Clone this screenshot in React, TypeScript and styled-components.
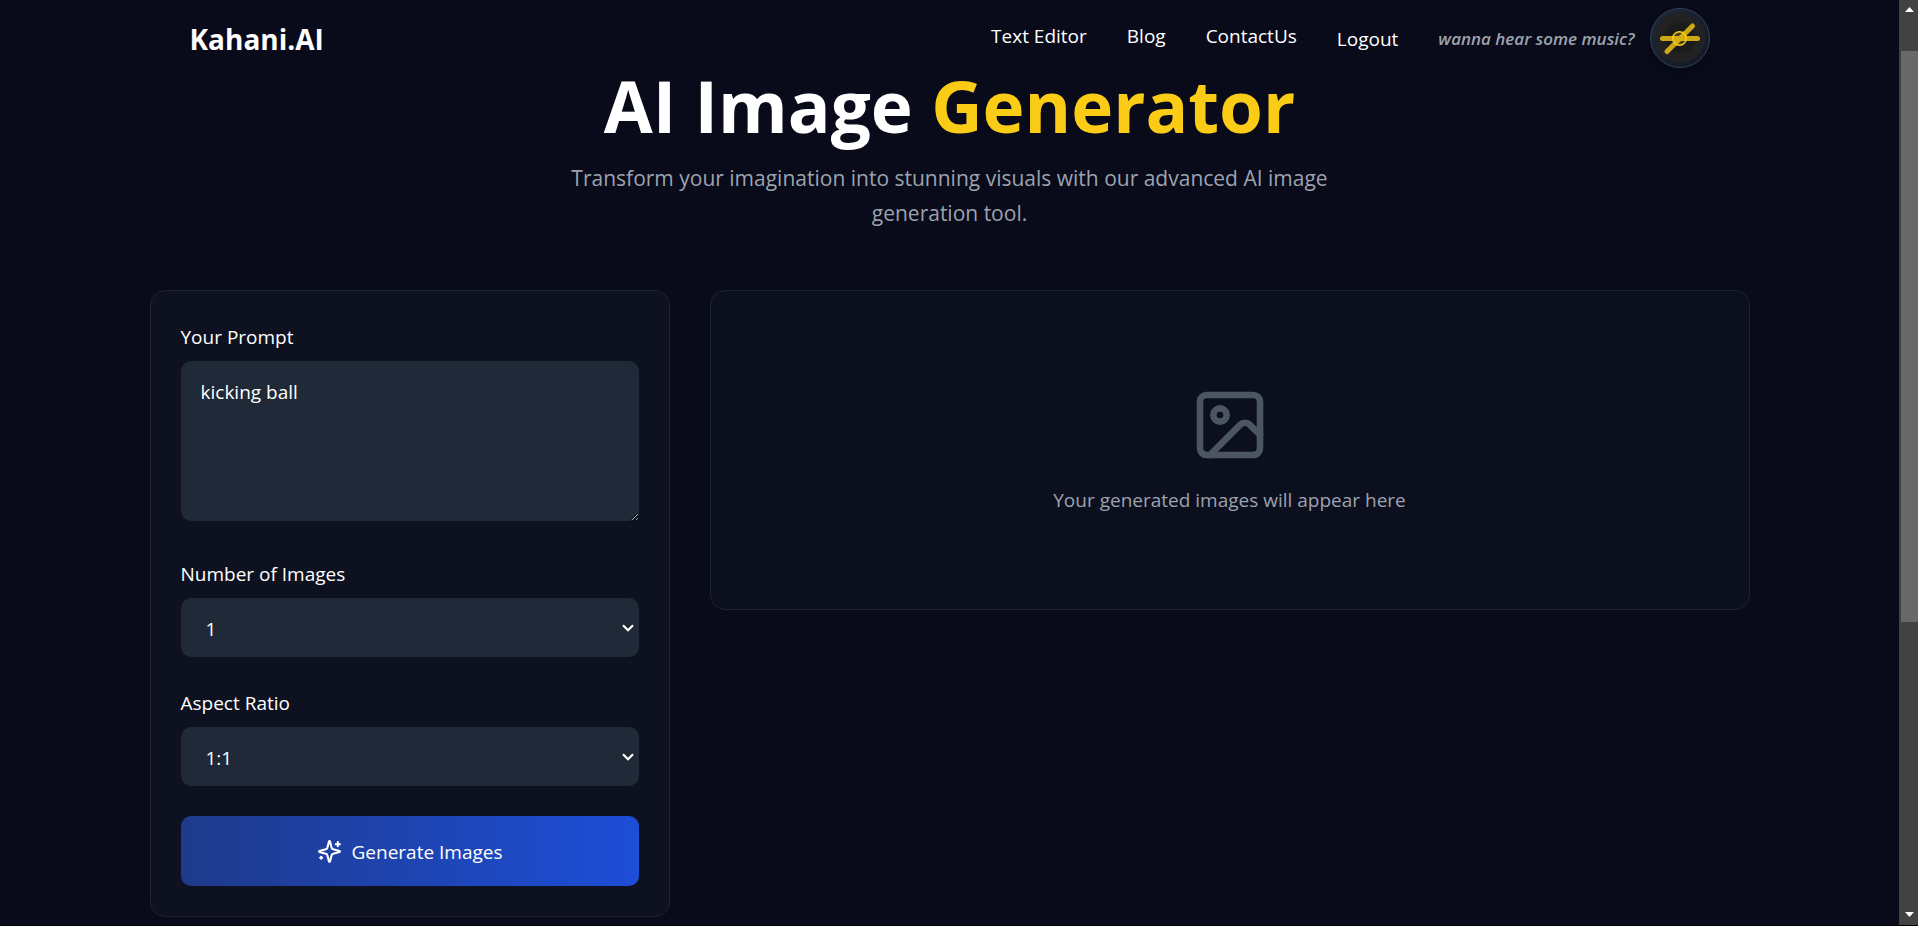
import React, { useState } from "react";
import styled, { createGlobalStyle } from "styled-components";
import { Image as ImageIcon } from "lucide-react";

const GlobalStyle = createGlobalStyle`
  *, *::before, *::after { box-sizing: border-box; }
  body {
    margin: 0;
    background: #090a1a;
    color: #ffffff;
    font: 400 19px/30px "Open Sans", "Noto Sans", sans-serif;
  }
  button, select, textarea { font: inherit; color: inherit; }
`;

const Page = styled.div`
  display: flex;
  min-height: 100vh;
  border-bottom: 1px solid #000000;
`;

const Content = styled.div`
  flex: 1;
  min-width: 0;
`;

const Container = styled.div`
  width: 100%;
  max-width: 1600px;
  margin: 0 auto;
`;

const Header = styled.header`
  padding-top: 8px;
`;

const HeaderRow = styled(Container)`
  display: flex;
  align-items: center;
  justify-content: space-between;
  height: 60px;
  padding: 0 40px;
`;

const Logo = styled.a`
  padding-top: 2px;
  font-size: 28px;
  line-height: 40px;
  font-weight: 700;
  color: #ffffff;
  text-decoration: none;
`;

const Nav = styled.nav`
  display: flex;
  align-items: center;
  gap: 40px;
`;

const NavLink = styled.a`
  padding-bottom: 4px;
  font-weight: 500;
  color: #ffffff;
  text-decoration: none;
`;

const LogoutButton = styled.button`
  padding: 2px 0 0;
  border: 0;
  background: none;
  font-weight: 500;
  cursor: pointer;
`;

const Music = styled.div`
  display: flex;
  align-items: center;
  gap: 15px;
`;

const MusicHint = styled.span`
  padding-top: 2px;
  font-size: 17px;
  font-style: italic;
  font-weight: 600;
  color: #9ca3af;
`;

const DiscButton = styled.button`
  display: block;
  width: 60px;
  height: 60px;
  padding: 0;
  border: 0;
  border-radius: 50%;
  background: none;
  box-shadow: 0 5px 8px rgba(0, 0, 0, 0.1);
  cursor: pointer;

  svg { display: block; }
`;

const Hero = styled.section`
  display: flex;
  flex-direction: column;
  align-items: center;
  gap: 18px;
  margin-bottom: 59px;
  text-align: center;
`;

const Title = styled.h1`
  margin: 0;
  font-size: 71px;
  line-height: 75px;
  font-weight: 700;

  span { color: #facc15; }
`;

const Subtitle = styled.p`
  max-width: 840px;
  margin: 0;
  font-size: 21px;
  line-height: 35px;
  color: #9ca3af;
`;

const Workspace = styled(Container)`
  display: grid;
  grid-template-columns: 1fr 2fr;
  align-items: start;
  gap: 40px;
`;

const FormCard = styled.form`
  display: flex;
  flex-direction: column;
  gap: 30px;
  padding: 30px;
  border: 1px solid #1c2332;
  border-radius: 15px;
  background: #0e1120;
`;

const Field = styled.div<{ $tall?: boolean }>`
  display: flex;
  flex-direction: column;
  gap: 8px;
  padding-bottom: ${(p) => (p.$tall ? 7 : 0)}px;
`;

const Label = styled.label`
  line-height: 32px;
`;

const PromptBox = styled.textarea`
  display: block;
  width: 100%;
  height: 160px;
  padding: 16px 20px;
  border: 0;
  border-radius: 10px;
  outline: none;
  background: #1f2937;
  resize: vertical;
`;

const SelectWrap = styled.div`
  position: relative;

  svg {
    position: absolute;
    top: 26px;
    right: 5px;
    pointer-events: none;
  }
`;

const Select = styled.select`
  display: block;
  width: 100%;
  height: 59px;
  padding: 2px 25px 0;
  border: 0;
  border-radius: 10px;
  outline: none;
  appearance: none;
  background: #1f2937;
`;

const GenerateButton = styled.button`
  display: flex;
  align-items: center;
  justify-content: center;
  gap: 10px;
  height: 70px;
  border: 0;
  border-radius: 10px;
  background: linear-gradient(to right, #1e3a8a, #1d4ed8);
  cursor: pointer;
`;

const ButtonText = styled.span`
  line-height: 28px;
  padding-top: 2px;
`;

const Gallery = styled.section`
  display: flex;
  flex-direction: column;
  align-items: center;
  justify-content: center;
  gap: 20px;
  min-height: 320px;
  border: 1px solid #1a2433;
  border-radius: 15px;
  background: #0c0f1e;
  color: #9ca3af;

  p { margin: 0; }
`;

const ScrollTrack = styled.aside`
  display: flex;
  flex-direction: column;
  position: sticky;
  top: 0;
  width: 19px;
  height: calc(100vh - 1px);
  padding-left: 2px;
  background: #424242;

  svg { display: block; flex: none; }
`;

const ScrollPart = styled.div<{ $grow: number; $thumb?: boolean }>`
  flex: ${(p) => p.$grow} 0 0;
  background: ${(p) => (p.$thumb ? "#686868" : "transparent")};
`;

const Disc = () => (
  <svg width="60" height="60" viewBox="0 0 60 60" fill="none" aria-hidden="true">
    <defs>
      <linearGradient id="rim" x1="0" y1="0" x2="1" y2="1">
        <stop offset="0" stopColor="#1f2937" />
        <stop offset="1" stopColor="#111827" />
      </linearGradient>
      <radialGradient id="vinyl">
        <stop offset="0.2" stopColor="#1a1a1a" />
        <stop offset="0.55" stopColor="#1b1b1b" />
        <stop offset="0.7" stopColor="#222222" />
        <stop offset="1" stopColor="#222222" />
      </radialGradient>
    </defs>
    <circle cx="30" cy="30" r="29.5" fill="url(#rim)" stroke="#374151" />
    <circle cx="30" cy="30" r="25" fill="url(#vinyl)" />
    <path
      d="M12.5 30.5h35M17 43.5l25.5-25.5"
      stroke="#facc15"
      strokeOpacity="0.8"
      strokeWidth="5"
      strokeLinecap="round"
    />
    <circle cx="29.5" cy="30.5" r="6.8" fill="#facc15" fillOpacity="0.2" stroke="#facc15" strokeWidth="1.5" />
  </svg>
);

const Sparkles = () => (
  <svg
    width="25"
    height="25"
    viewBox="0 0 24 24"
    fill="none"
    stroke="currentColor"
    strokeWidth="2"
    strokeLinecap="round"
    strokeLinejoin="round"
    aria-hidden="true"
  >
    <path d="M9.937 15.5A2 2 0 0 0 8.5 14.063l-6.135-1.582a.5.5 0 0 1 0-.962L8.5 9.936A2 2 0 0 0 9.937 8.5l1.582-6.135a.5.5 0 0 1 .963 0L14.063 8.5A2 2 0 0 0 15.5 9.937l6.135 1.581a.5.5 0 0 1 0 .964L15.5 14.063a2 2 0 0 0-1.437 1.437l-1.582 6.135a.5.5 0 0 1-.963 0z" />
    <path d="M20 3v4M22 5h-4M4 17v2M5 18H3" />
  </svg>
);

const SelectArrow = () => (
  <svg width="12" height="8" viewBox="0 0 12 8" fill="none" aria-hidden="true">
    <path d="M1 1.2l5 5 5-5" stroke="#ffffff" strokeWidth="2.2" />
  </svg>
);

const ScrollArrow = ({ down }: { down?: boolean }) => (
  <svg width="17" height="17" viewBox="0 0 17 17" aria-hidden="true">
    <path d={down ? "M4 4h9l-4.5 5z" : "M4 12h9l-4.5-5z"} fill="#ffffff" />
  </svg>
);

interface SelectFieldProps {
  id: string;
  label: string;
  options: string[];
}

const SelectField = ({ id, label, options }: SelectFieldProps) => (
  <Field>
    <Label htmlFor={id}>{label}</Label>
    <SelectWrap>
      <Select id={id} defaultValue={options[0]}>
        {options.map((option) => (
          <option key={option}>{option}</option>
        ))}
      </Select>
      <SelectArrow />
    </SelectWrap>
  </Field>
);

export default function App() {
  const [prompt, setPrompt] = useState("kicking ball");

  return (
    <>
      <GlobalStyle />
      <Page>
        <Content>
          <Header>
            <HeaderRow>
              <Logo href="#">Kahani.AI</Logo>
              <Nav>
                <NavLink href="#editor">Text Editor</NavLink>
                <NavLink href="#blog">Blog</NavLink>
                <NavLink href="#contact">ContactUs</NavLink>
                <LogoutButton type="button">Logout</LogoutButton>
                <Music>
                  <MusicHint>wanna hear some music?</MusicHint>
                  <DiscButton type="button" aria-label="Play music">
                    <Disc />
                  </DiscButton>
                </Music>
              </Nav>
            </HeaderRow>
          </Header>
          <main>
            <Hero>
              <Title>
                AI Image <span>Generator</span>
              </Title>
              <Subtitle>
                Transform your imagination into stunning visuals with our advanced AI image generation tool.
              </Subtitle>
            </Hero>
            <Workspace>
              <FormCard onSubmit={(e: React.FormEvent) => e.preventDefault()}>
                <Field $tall>
                  <Label htmlFor="prompt">Your Prompt</Label>
                  <PromptBox
                    id="prompt"
                    spellCheck={false}
                    value={prompt}
                    onChange={(e) => setPrompt(e.target.value)}
                  />
                </Field>
                <SelectField id="count" label="Number of Images" options={["1", "2", "3", "4"]} />
                <SelectField id="ratio" label="Aspect Ratio" options={["1:1", "16:9", "9:16", "4:3"]} />
                <GenerateButton type="submit">
                  <Sparkles />
                  <ButtonText>Generate Images</ButtonText>
                </GenerateButton>
              </FormCard>
              <Gallery>
                <ImageIcon size={80} color="#4b5563" />
                <p>Your generated images will appear here</p>
              </Gallery>
            </Workspace>
          </main>
        </Content>
        <ScrollTrack aria-hidden="true">
          <ScrollArrow />
          <ScrollPart $grow={34} />
          <ScrollPart $grow={571} $thumb />
          <ScrollPart $grow={286} />
          <ScrollArrow down />
        </ScrollTrack>
      </Page>
    </>
  );
}
